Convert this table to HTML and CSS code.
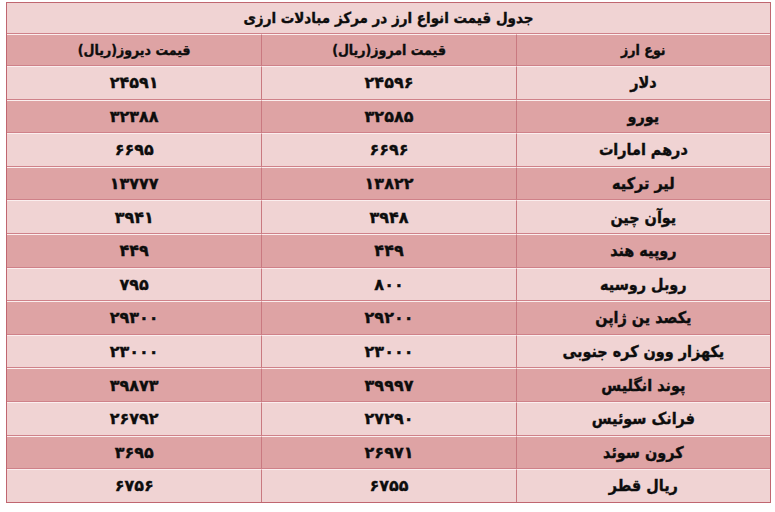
FILE: index.html
```html
<!DOCTYPE html>
<html lang="fa" dir="rtl">
<head>
<meta charset="utf-8">
<title>جدول قیمت انواع ارز</title>
<link rel="stylesheet" href="styles.css">
</head>
<body>
<table class="rates">
  <thead>
    <tr class="title-row"><th colspan="3">جدول قیمت انواع ارز در مرکز مبادلات ارزی</th></tr>
    <tr class="head-row dark"><th>نوع ارز</th><th>قیمت امروز(ریال)</th><th>قیمت دیروز(ریال)</th></tr>
  </thead>
  <tbody>
    <tr class="light"><td>دلار</td><td>۲۴۵۹۶</td><td>۲۴۵۹۱</td></tr>
    <tr class="dark"><td>یورو</td><td>۳۲۵۸۵</td><td>۳۲۳۸۸</td></tr>
    <tr class="light"><td>درهم امارات</td><td>۶۶۹۶</td><td>۶۶۹۵</td></tr>
    <tr class="dark"><td>لیر ترکیه</td><td>۱۳۸۲۲</td><td>۱۳۷۷۷</td></tr>
    <tr class="light"><td>یوآن چین</td><td>۳۹۴۸</td><td>۳۹۴۱</td></tr>
    <tr class="dark"><td>روپیه هند</td><td>۴۴۹</td><td>۴۴۹</td></tr>
    <tr class="light"><td>روبل روسیه</td><td>۸۰۰</td><td>۷۹۵</td></tr>
    <tr class="dark"><td>یکصد ین ژاپن</td><td>۲۹۲۰۰</td><td>۲۹۳۰۰</td></tr>
    <tr class="light"><td>یکهزار وون کره جنوبی</td><td>۲۳۰۰۰</td><td>۲۳۰۰۰</td></tr>
    <tr class="dark"><td>پوند انگلیس</td><td>۳۹۹۹۷</td><td>۳۹۸۷۳</td></tr>
    <tr class="light"><td>فرانک سوئیس</td><td>۲۷۲۹۰</td><td>۲۶۷۹۲</td></tr>
    <tr class="dark"><td>کرون سوئد</td><td>۲۶۹۷۱</td><td>۳۶۹۵</td></tr>
    <tr class="light"><td>ریال قطر</td><td>۶۷۵۵</td><td>۶۷۵۶</td></tr>
  </tbody>
</table>
</body>
</html>
```
FILE: styles.css
```css
html, body {
  margin: 0;
  padding: 0;
  background: #ffffff;
}

body {
  padding: 2px 4px 0 6px;
  font-family: "DejaVu Sans", "Noto Sans", sans-serif;
  color: #0d0d0d;
}

.rates {
  width: 765px;
  border-collapse: separate;
  border-spacing: 0;
  border: 1px solid #c06670;
  table-layout: fixed;
}

.rates th,
.rates td {
  text-align: center;
  vertical-align: middle;
  padding: 0;
  font-weight: bold;
  -webkit-text-stroke: 0.35px #0d0d0d;
  border-top: 1px solid #fbeeee;
  border-bottom: 1px solid #cf8189;
  border-left: 1px solid #c97980;
}

.rates tr > :last-child {
  border-left: none;
}

.title-row th {
  height: 30px;
  font-family: "DejaVu Sans Condensed", "DejaVu Sans", sans-serif;
  font-stretch: condensed;
  font-size: 15px;
  background: #f0d3d3;
  border-top: none;
}

.head-row th {
  height: 30px;
  font-family: "DejaVu Sans Condensed", "DejaVu Sans", sans-serif;
  font-stretch: condensed;
  font-size: 14px;
  width: 33.33%;
}

.rates td {
  height: 31.6px;
  font-size: 16px;
}

.rates td:first-child {
  font-family: "DejaVu Sans Condensed", "DejaVu Sans", sans-serif;
  font-stretch: condensed;
  font-size: 16px;
}

.rates tbody tr:last-child td {
  border-bottom: none;
}

.light th,
.light td {
  background: #f0d3d3;
}

.dark th,
.dark td {
  background: #dea3a4;
}
```
